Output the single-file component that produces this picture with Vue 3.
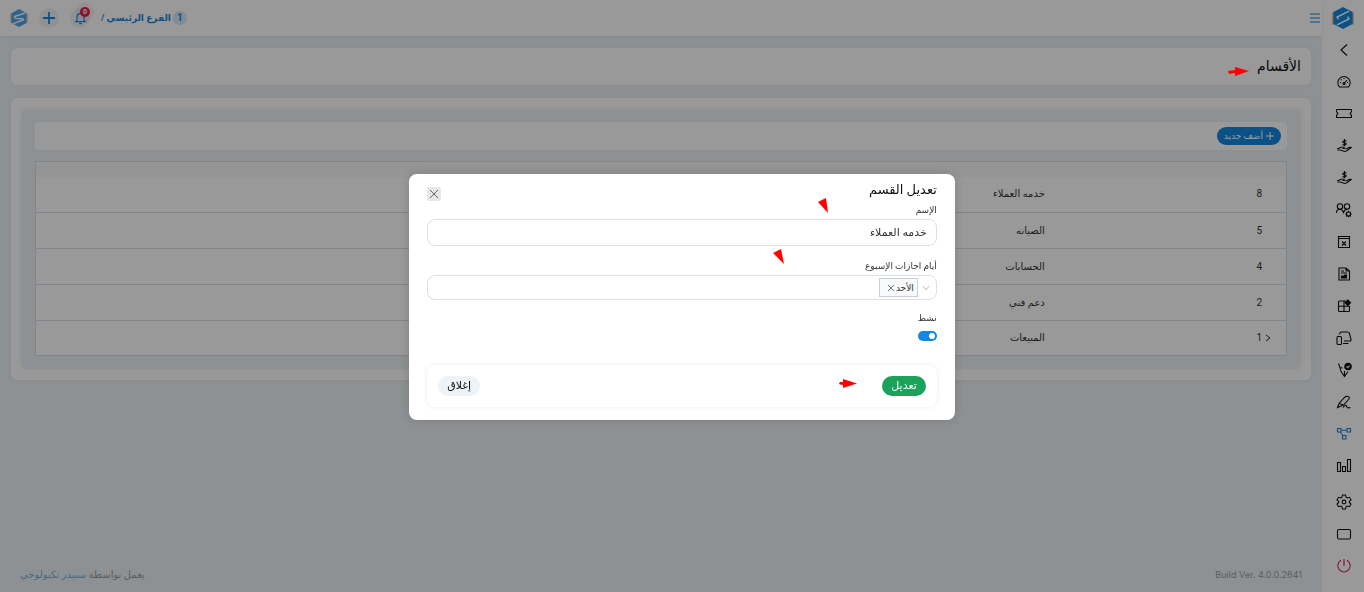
<script setup>
import { ref } from 'vue'

const rows = [
  { id: 8, name: 'خدمه العملاء' },
  { id: 5, name: 'الصيانه' },
  { id: 4, name: 'الحسابات' },
  { id: 2, name: 'دعم فني' },
  { id: 1, name: 'المبيعات', expandable: true }
]

const hand = '<path d="M1 10.500h2l1.500-1.300h3l1.300 1.300H6.500M10 11l3.500-1.700 1.500.2-4 3.200-2.500.8-4-1.500H1.500"/><path d="M10.500 2.700H8c-1.500 0-1.500 2 0 2h1c1.500 0 1.500 2.200 0 2.200H6.500M8.500 1v7.200"/>'

const mainNav = [
  { label: 'رجوع', art: '<path d="M11 2.500 5 8l6 5.500"/>' },
  { label: 'لوحة التحكم', art: '<path d="M3.500 13a6.200 6.200 0 1 1 9 0zM8 9.500l3-3.500"/><circle cx="8" cy="9.500" r="1"/><path d="M8 4v1M4 8.500h1M5 5.500l.7.7M12 8.500h-1"/>' },
  { label: 'التذاكر', art: '<path d="M.5 3.500h15V6c-1.800.3-1.800 2.700 0 3v2.500H.5V9c1.800-.3 1.800-2.700 0-3z"/>' },
  { label: 'المدفوعات', art: hand },
  { label: 'المقبوضات', art: hand },
  { label: 'الموظفون', art: '<circle cx="4" cy="4.500" r="2.700"/><circle cx="11" cy="4.500" r="2.700"/><path d="M.3 11c.2-2 1.500-3.700 3.700-3.700S7 9 7.500 10.500C8 9 9 7.500 11 7.300"/><circle cx="12.500" cy="12" r="2"/><path d="M12.500 8.800v1.200M12.500 14v1.200M9.300 12h1.200M14.500 12h1.200M10.300 9.800l.8.800M14 13.500l.8.800M14.800 9.800l-.8.800M11 13.500l-.8.800"/>' },
  { label: 'الإجازات', art: '<path d="M2.500 2.500h11v11h-11zM2.500 4.500h11M6 7.500l4 4M10 7.500l-4 4"/>' },
  { label: 'التقارير', art: '<path d="M3 2h7l3.500 3v9H3zM10 2v3h3.500M5 5h3M5 7h6"/><path d="M5.500 12v-2h2v1h1V9h2v3z" fill="currentColor"/>' },
  { label: 'التطبيقات', art: '<path d="M10 3H3.500a1 1 0 0 0-1 1v8.500a1 1 0 0 0 1 1h9a1 1 0 0 0 1-1V8.200h-11M8 3v10.500"/><path d="m11.800 2 2.700 2.700-2.700 2.700L9.100 4.700z" fill="currentColor"/>' },
  { label: 'الأجهزة', art: '<rect x="1" y="6.500" width="4.500" height="8" rx="1"/><path d="M3 4.500 4 3q.5-1 1.500-1h6q1.500 0 2 1.500l1.500 6q.3 1.500-1.200 1.500H8M7 13.500h5.500"/>' },
  { label: 'المصادقة', art: '<path d="M4 5.500 4.800 9 8.500 14.500 12 9.500M8.500 14V9M4 5.500l2.500.5M2.500 1.500l1.500 4"/><circle cx="12" cy="4.500" r="3.200" fill="currentColor"/><path d="m10.500 4.500 1.200 1.200 1.900-2" stroke="#fff"/>' },
  { label: 'التوقيع', art: '<path d="M1.500 13.500 3 9.500 8.500 3.500c2-2 6-1 4.500 1.500L7.500 11zM3 9.500 7.500 11M7 13.500c1-2 3.500-3 3.500-1.500s.5.500 1 1.500 2 0 3 0"/>' },
  { label: 'الأقسام', active: true, art: '<path d="M1.500 2.500H5V6H1.500zM11 2.500h3.500V6H11zM6.500 9.500H10V13H6.500zM5 4.300h6M4 6l3 3.500"/>' },
  { label: 'الإحصائيات', art: '<path d="M1.500 4.500h3v9h-3zM6.500 8.500h3v5h-3zM11.500 1.500h3v12h-3z"/>' }
]

const footNav = [
  { label: 'الإعدادات', art: '<path d="M6.500 1h3l.5 2.200 1.300.8 2.200-.7 1.500 2.500L13.400 7.300v1.400l1.600 1.500-1.500 2.500-2.200-.7-1.300.8-.5 2.200h-3L6 12.800 4.700 12l-2.200.7L1 10.200l1.600-1.500V7.300L1 5.800l1.500-2.500L4.700 4 6 3.200z"/><circle cx="8" cy="8" r="1.900"/>' },
  { label: 'ملء الشاشة', art: '<rect x="1.500" y="3.500" width="13" height="9.500" rx="1.500"/>' },
  { label: 'تسجيل الخروج', danger: true, art: '<path d="M5 2.300a6.200 6.200 0 1 0 6 0M8 1v7"/>' }
]

const name = ref('خدمه العملاء')
const active = ref(true)
const day = ref('')
</script>

<template>
  <div class="app" dir="rtl">
    <aside class="side">
      <a href="#" class="brand" aria-label="الرئيسية">
        <svg viewBox="0 0 24 26" width="22" height="24">
          <path d="M1 7v13M23 7v13" stroke="#f3b98c" stroke-width="2" />
          <path d="M12 1 22.500 6.500v13L12 25 1.500 19.500v-13z" fill="#1488e0" />
          <path d="M18.500 5.500 5.500 12l1.500 2.500M5.500 20.500l13-6.500-1.500-2.500" fill="none" stroke="#fff" stroke-width="1.600" />
        </svg>
      </a>
      <nav class="nav">
        <a v-for="item in mainNav" :key="item.label" href="#" :class="{ active: item.active }" :aria-label="item.label">
          <svg viewBox="0 0 16 16" v-html="item.art" />
        </a>
      </nav>
      <nav class="nav foot">
        <a v-for="item in footNav" :key="item.label" href="#" :class="{ danger: item.danger }" :aria-label="item.label">
          <svg viewBox="0 0 16 16" v-html="item.art" />
        </a>
      </nav>
    </aside>

    <div class="main">
      <header class="top">
        <button class="menu" aria-label="القائمة">
          <svg viewBox="0 0 12 10" width="12" height="10"><path d="M1 1h10M1 5h10M1 9h10" /></svg>
        </button>
        <div class="tools">
          <a href="#" class="branch"><span class="count">1</span><span>الفرع الرئيسي /</span></a>
          <button class="round" aria-label="الإشعارات">
            <svg viewBox="0 0 16 16" width="15" height="15"><path d="M2 12.500h12M3.500 12.500c1-1 .8-3 .8-5a3.700 3.700 0 0 1 7.400 0c0 2-.2 4 .8 5M6.500 14.500h3M8 3.500V2" stroke-width="1.300" /></svg>
            <span class="badge">0</span>
          </button>
          <button class="round" aria-label="إضافة">
            <svg viewBox="0 0 14 14" width="14" height="14"><path d="M7 1v12M1 7h12" stroke-width="1.800" /></svg>
          </button>
          <a href="#" class="avatar" aria-label="الحساب">
            <svg viewBox="0 0 24 26" width="18" height="20">
              <path d="M1.500 7v12M22.500 7v12" stroke="#f3b98c" stroke-width="2" />
              <path d="M12 1 22 6.500v13L12 25 2 19.500v-13z" fill="#4aa5ee" />
              <path d="M20 6.500 6 11l1 2.500 10 .5 1 1.500L4 20.500" fill="none" stroke="#fff" stroke-width="1.800" />
            </svg>
          </a>
        </div>
      </header>

      <main class="content">
        <section class="card title"><h1>الأقسام</h1></section>
        <section class="card body">
          <div class="panel">
            <div class="toolbar"><button class="add"><svg viewBox="0 0 8 8" width="8" height="8"><path d="M4 0v8M0 4h8" /></svg>أضف جديد</button></div>
            <table>
              <colgroup><col class="c-id" /><col /></colgroup>
              <thead><tr><th></th><th></th></tr></thead>
              <tbody>
                <tr v-for="r in rows" :key="r.id">
                  <td>
                    <div class="id">
                      <span class="slot"><button v-if="r.expandable" aria-label="توسيع"><svg viewBox="0 0 6 8" width="6" height="8"><path d="m1 1 4 3-4 3" /></svg></button></span>
                      <span>{{ r.id }}</span>
                    </div>
                  </td>
                  <td>{{ r.name }}</td>
                </tr>
              </tbody>
            </table>
          </div>
        </section>
      </main>

      <footer class="bottom">
        <span dir="ltr" class="ver">Build Ver. 4.0.0.2641</span>
        <span class="by">يعمل بواسطة <a href="#">سبيدر تكنولوجي</a></span>
      </footer>
    </div>

    <div class="overlay">
      <form class="modal" role="dialog" aria-labelledby="dlg" @submit.prevent>
        <div class="head">
          <h2 id="dlg">تعديل القسم</h2>
          <button type="button" class="close" aria-label="إغلاق النافذة"><svg viewBox="0 0 10 10" width="10" height="10"><path d="m1 1 8 8M9 1 1 9" /></svg></button>
        </div>
        <label for="name">الإسم</label>
        <input id="name" v-model="name" class="field" type="text" />
        <label for="days">أيام اجازات الإسبوع</label>
        <div class="field picker">
          <svg class="arrow" viewBox="0 0 8 6" width="8" height="6"><path d="m1 1 3 4 3-4" /></svg>
          <span class="tag">الأحد<button type="button" aria-label="إزالة الأحد"><svg viewBox="0 0 8 8" width="8" height="8"><path d="m1 1 6 6M7 1 1 7" /></svg></button></span>
          <select id="days" v-model="day"><option value=""></option></select>
        </div>
        <label for="active">نشط</label>
        <input id="active" v-model="active" class="switch" type="checkbox" role="switch" />
        <div class="actions">
          <button class="save">تعديل</button>
          <button type="button" class="cancel">إغلاق</button>
        </div>
      </form>
    </div>

    <svg class="mark m1" viewBox="0 0 22 10" width="22" height="10"><path d="M0 4 7 3V0l14 4L7 9V6L1 7z" /></svg>
    <svg class="mark m2" viewBox="0 0 10 15" width="10" height="15"><path d="M0 4 8 0l2 15z" /></svg>
    <svg class="mark m3" viewBox="0 0 12 15" width="12" height="15"><path d="M0 4 8 0l3 15z" /></svg>
    <svg class="mark m4" viewBox="0 0 18 9" width="18" height="9"><path d="M1 3h3V0l14 4.500L4 9V6L1 5.500 0 4.500z" /></svg>
  </div>
</template>

<style>
body {
  background: #edf2f5;
}
</style>

<style scoped>
* {
  box-sizing: border-box;
}
.app {
  display: flex;
  min-height: 100vh;
  position: relative;
  font: 9px/14px "Roboto", "DejaVu Sans", sans-serif;
  color: #333;
}
button,
input,
select {
  font: inherit;
  color: inherit;
  border: 0;
  padding: 0;
  margin: 0;
  background: none;
}
a {
  color: inherit;
  text-decoration: none;
}
svg {
  display: block;
  fill: none;
  stroke: currentColor;
}
h1,
h2 {
  margin: 0;
  font-weight: 400;
}
.side {
  flex: 0 0 42px;
  background: #fff;
}
.brand {
  display: flex;
  justify-content: center;
  align-items: center;
  height: 34px;
  padding-top: 2px;
}
.brand svg,
.avatar svg {
  stroke: none;
}
.nav a {
  display: flex;
  align-items: center;
  justify-content: center;
  height: 32px;
  padding-left: 2px;
  color: #111;
}
.nav a.active {
  color: #1488e0;
}
.nav a.danger {
  color: #d8214b;
}
.nav svg {
  width: 16px;
  height: 16px;
  stroke-width: 1.1;
}
.foot {
  margin-top: 4px;
}
.main {
  flex: 1;
  min-width: 0;
  display: flex;
  flex-direction: column;
}
.top {
  display: flex;
  align-items: center;
  justify-content: space-between;
  height: 36px;
  padding: 0 1px 1px 10px;
  background: #fff;
  color: #1488e0;
  box-shadow: 0 1px 4px rgba(0, 0, 0, 0.06);
}
.menu svg {
  stroke: #1488e0;
  stroke-width: 1.2;
}
.tools {
  display: flex;
  align-items: center;
  gap: 11px;
}
.branch {
  display: flex;
  align-items: center;
  gap: 2px;
  font-weight: 700;
}
.count {
  width: 14px;
  font-size: 10px;
  text-align: center;
  border-radius: 7px;
  background: #d5eafb;
}
.round {
  display: flex;
  align-items: center;
  justify-content: center;
  position: relative;
  width: 20px;
  height: 20px;
  border-radius: 10px;
  background: #edf3f8;
}
.badge {
  position: absolute;
  top: -1px;
  right: 0;
  width: 10px;
  height: 10px;
  border-radius: 5px;
  background: #e0224e;
  color: #fff;
  font: 700 7px/10px "Roboto", sans-serif;
  box-shadow: 0 0 0 4px rgba(224, 34, 78, 0.08);
}
.content {
  flex: 1;
  padding: 12px 11px;
}
.card {
  background: #fff;
  border-radius: 6px;
  box-shadow: 0 0 5px rgba(60, 20, 20, 0.08);
}
.title {
  padding: 8px 10px;
}
.title h1 {
  font-size: 14px;
  line-height: 21px;
  color: #111;
}
.body {
  margin-top: 13px;
  padding: 11px 10px;
}
.panel {
  padding: 13px 14px;
  border-radius: 6px;
  background: #edf2f5;
  box-shadow: 0 0 5px rgba(60, 40, 40, 0.06);
}
.toolbar {
  padding: 5px 6px;
  border-radius: 4px;
  background: #fff;
  margin-bottom: 11px;
}
.add {
  display: flex;
  align-items: center;
  gap: 3px;
  height: 18px;
  padding: 0 7px;
  border-radius: 9px;
  background: #1488e0;
  color: #fff;
}
table {
  width: 100%;
  table-layout: fixed;
  border-collapse: collapse;
  background: #fff;
  border: 1px solid #d8dee5;
}
.c-id {
  width: 19%;
}
th {
  height: 15px;
  padding: 0;
  background: #f9f9f9;
}
td {
  height: 36px;
  padding: 0 4px;
  border-bottom: 1px solid #d8dee5;
  font-size: 10px;
}
tr:last-child td {
  height: 35px;
}
.id {
  display: flex;
  align-items: center;
}
.slot {
  width: 20px;
  display: flex;
  justify-content: flex-end;
  padding-left: 3px;
}
.bottom {
  display: flex;
  justify-content: space-between;
  padding: 10px 20px;
  color: #999;
}
.bottom a {
  color: #78aed6;
}
.by {
  font-size: 10px;
}
.ver {
  font-family: "Inter", sans-serif;
}
.overlay {
  position: fixed;
  inset: 0;
  display: flex;
  align-items: center;
  justify-content: center;
  padding-top: 2px;
  background: rgba(0, 0, 0, 0.4);
}
.modal {
  width: 40%;
  padding: 6px 18px 13px;
  border-radius: 8px;
  background: #fff;
  box-shadow: 0 0 12px rgba(0, 0, 0, 0.16);
}
.head {
  display: flex;
  justify-content: space-between;
  align-items: flex-start;
}
.head h2 {
  font-size: 13px;
  line-height: 20px;
  color: #111;
}
.close {
  display: flex;
  align-items: center;
  justify-content: center;
  width: 14px;
  height: 14px;
  margin-top: 7px;
  border-radius: 2px;
  background: #e7e7e7;
  color: #666;
}
label {
  display: block;
  line-height: 18px;
}
.field {
  display: block;
  width: 100%;
  height: 27px;
  margin-bottom: 11px;
  padding: 0 9px;
  border: 1px solid #dcdfe6;
  border-radius: 8px;
  font-size: 11px;
}
.picker {
  display: flex;
  align-items: center;
  gap: 4px;
  height: 25px;
  margin-bottom: 9px;
  padding: 0 6px;
}
.arrow {
  color: #bbb;
}
.tag {
  display: flex;
  align-items: center;
  gap: 1px;
  height: 19px;
  padding: 0 3px 0 7px;
  border: 1px solid #c9cfd6;
  background: #f8f9fb;
  font-size: 9px;
}
.tag svg {
  color: #777;
}
.picker select {
  flex: 1;
  min-width: 0;
  height: 20px;
  appearance: none;
  outline: 0;
}
.switch {
  appearance: none;
  display: flex;
  width: 19px;
  height: 10px;
  margin-top: 4px;
  padding: 2px;
  border-radius: 5px;
  background: #c5ccd3;
}
.switch::before {
  content: "";
  width: 6px;
  height: 6px;
  margin-right: auto;
  border-radius: 3px;
  background: #fff;
}
.switch:checked {
  background: #1488e0;
}
.switch:checked::before {
  margin-right: 0;
}
.actions {
  display: flex;
  justify-content: space-between;
  margin-top: 24px;
  padding: 11px;
  border-radius: 8px;
  box-shadow: 0 0 5px rgba(0, 0, 0, 0.08);
}
.actions button {
  height: 20px;
  padding: 0 9px;
  border-radius: 10px;
  font-size: 11px;
}
.actions .save {
  background: #1ba35b;
  color: #fff;
}
.actions .cancel {
  background: #eef3f7;
  color: #111;
}
.mark {
  position: absolute;
  fill: #f00;
  stroke: none;
}
.m1 {
  left: 1228px;
  top: 67px;
}
.m2 {
  left: 818px;
  top: 198px;
}
.m3 {
  left: 773px;
  top: 249px;
}
.m4 {
  left: 839px;
  top: 379px;
}
</style>
